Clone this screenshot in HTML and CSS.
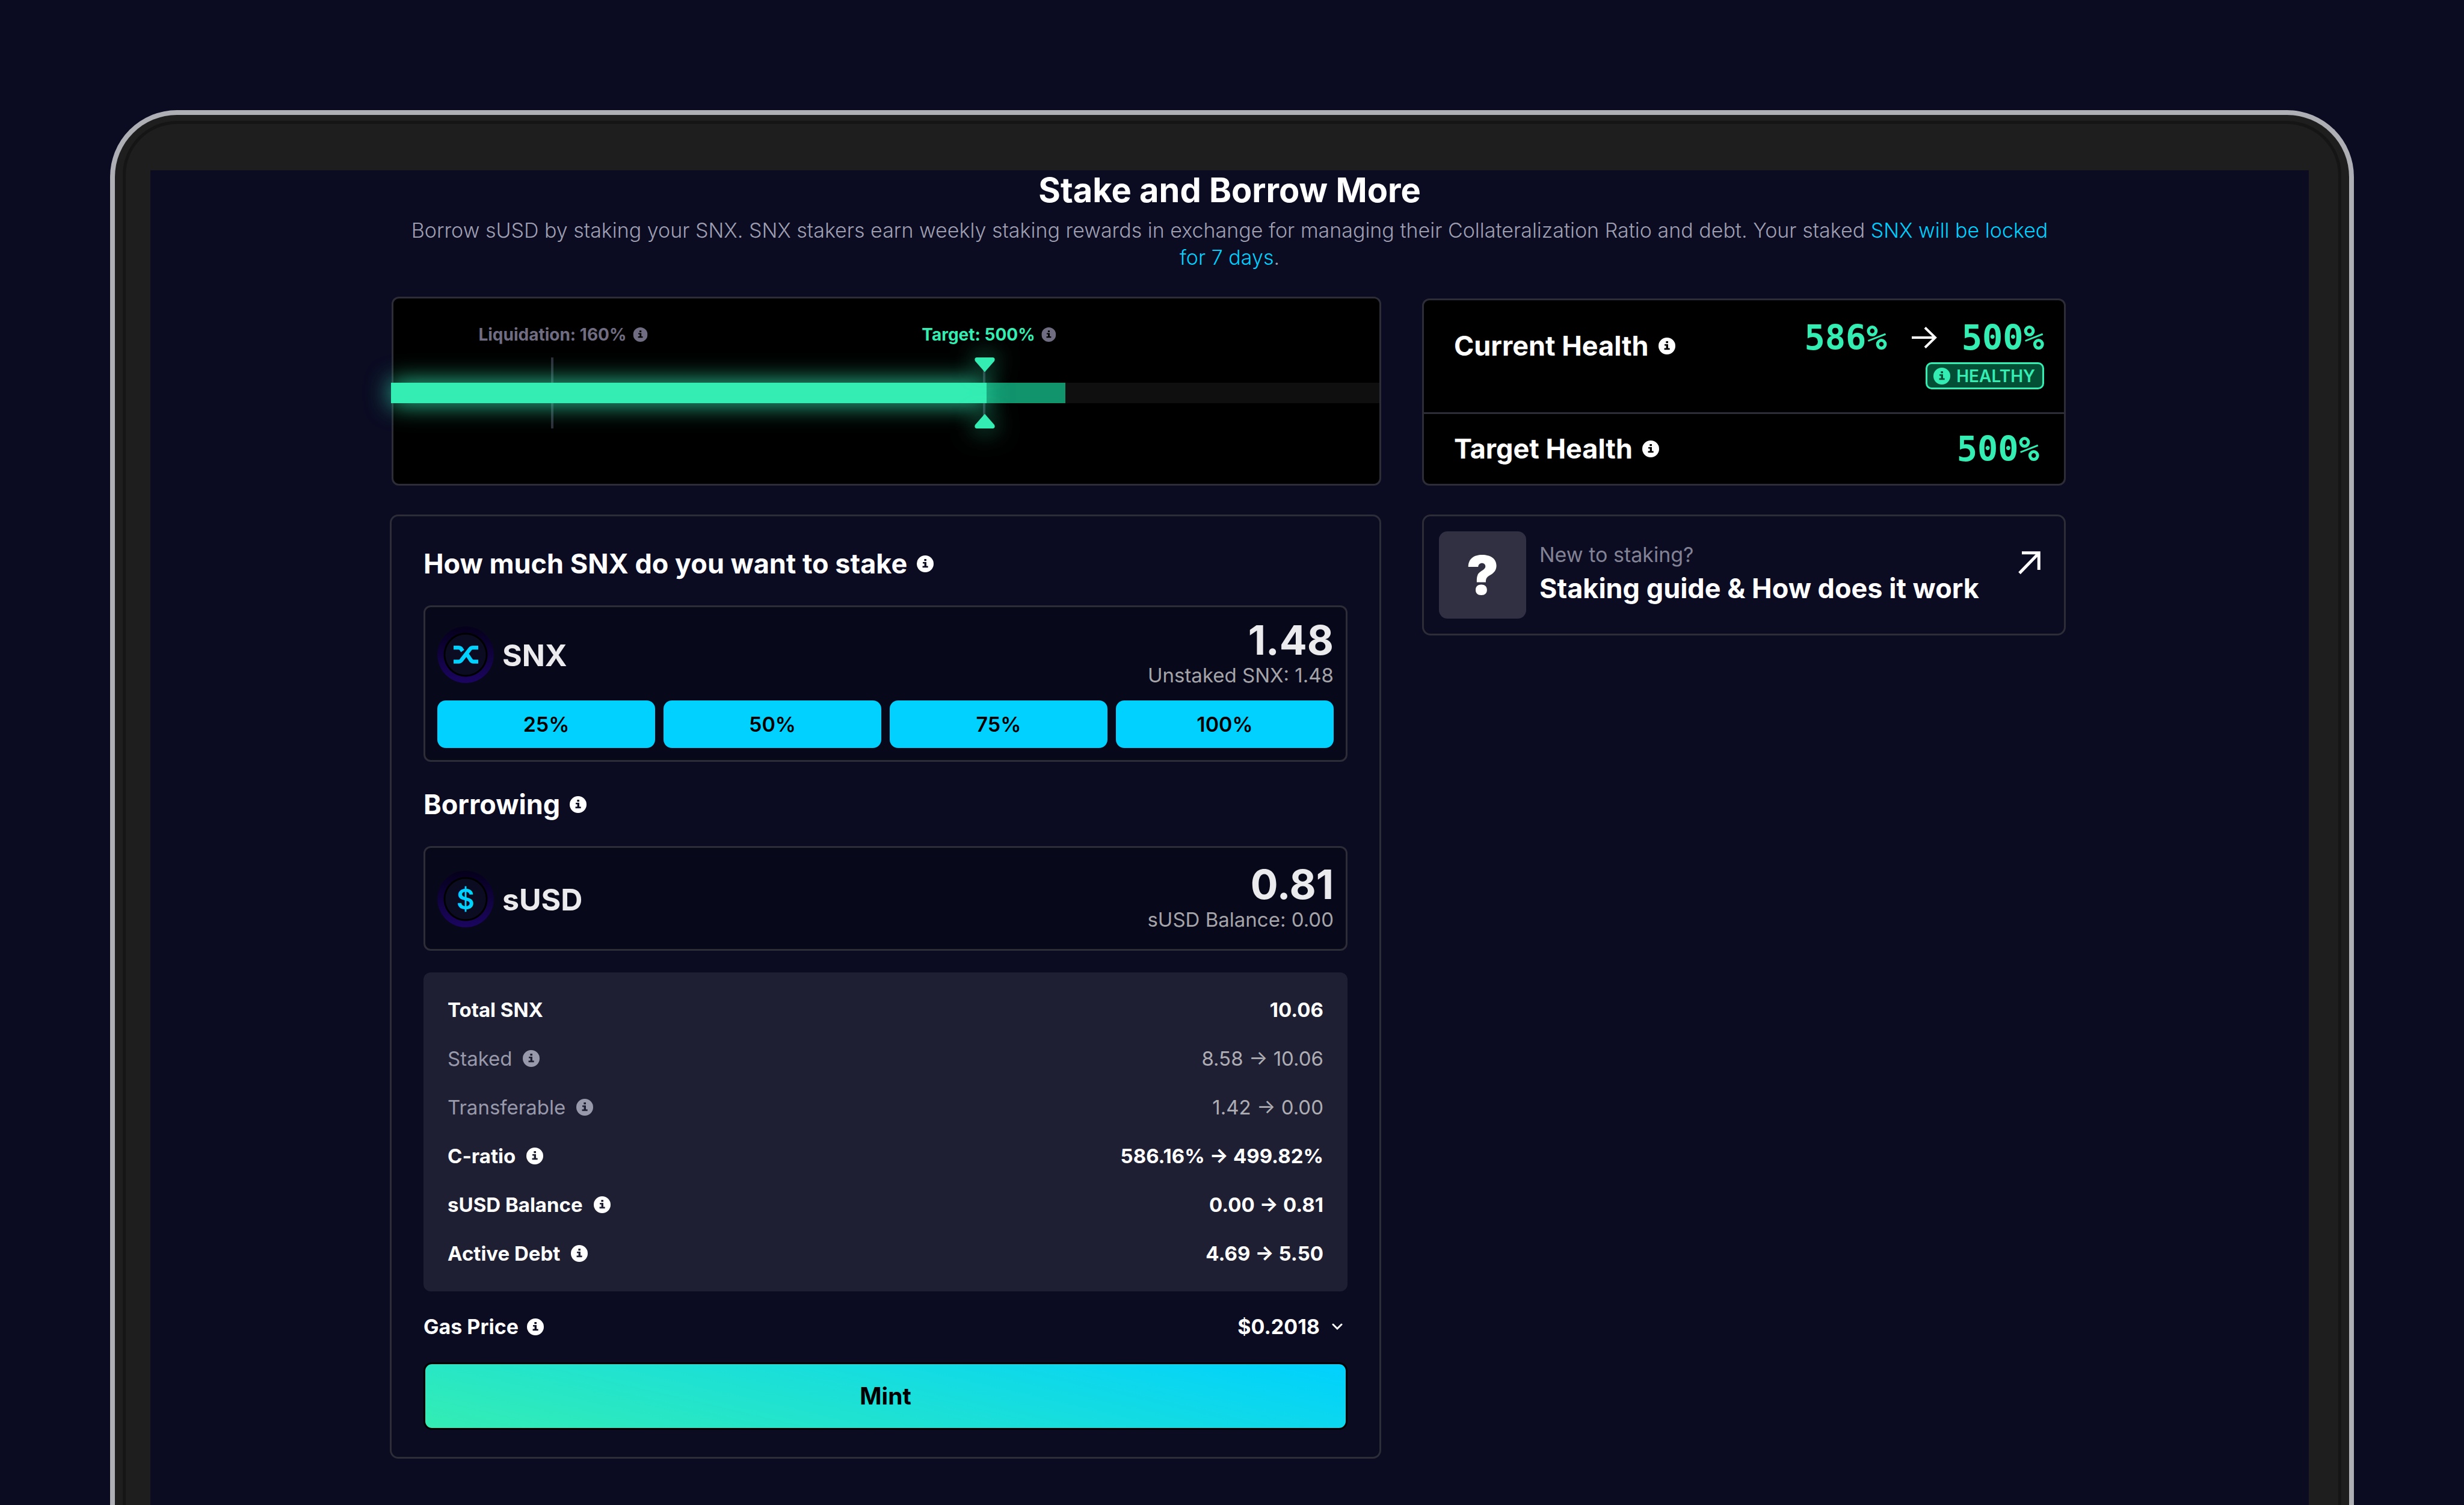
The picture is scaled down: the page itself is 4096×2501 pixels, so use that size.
FILE: index.html
```html
<!DOCTYPE html>
<html lang="en">
<head>
<meta charset="utf-8">
<meta name="viewport" content="width=device-width, initial-scale=1">
<title>Stake and Borrow More</title>
<link rel="stylesheet" href="styles.css">
</head>
<body>
<svg class="sprite" aria-hidden="true">
  <symbol id="info" viewBox="0 0 24 24">
    <path fill="currentColor" fill-rule="evenodd" d="M12 0a12 12 0 1 1 0 24a12 12 0 0 1 0-24zM10.6 5.2v2.7h3.1V5.2zM8.6 9.4v2.1h2.2v3.6H8.2v2.2h7.8v-2.2h-2.3V9.4z"/>
  </symbol>
</svg>
<div class="device">
  <div class="bezel">
    <main class="screen">
      <h1 class="title">Stake and Borrow More</h1>
      <p class="intro">Borrow sUSD by staking your SNX. SNX stakers earn weekly staking rewards in exchange for managing their Collateralization Ratio and debt. Your staked <a class="intro-link" href="#lock">SNX will be locked for 7 days</a>.</p>

      <div class="layout">
        <section class="gauge" aria-label="Collateralization ratio">
          <div class="track">
            <div class="tick" style="left: 16%"></div>
            <div class="tick" style="left: 59.8%"></div>
            <div class="bar bar-current" style="width: 68.4%"></div>
            <div class="bar bar-new" style="width: 60.4%"></div>
            <svg class="arrowhead arrowhead-top" style="left: 60%" viewBox="0 0 34 24"><path d="M3 0h28q4 1 2 6L18.500 22.500q-1.500 3-3 0L1 6Q-1 1 3 0z"/></svg>
            <svg class="arrowhead arrowhead-bottom" style="left: 60%" viewBox="0 0 34 24"><path d="M3 0h28q4 1 2 6L18.500 22.500q-1.500 3-3 0L1 6Q-1 1 3 0z"/></svg>
            <div class="mark" style="left: 17.2%">Liquidation: 160% <svg class="info-small"><use href="#info"/></svg></div>
            <div class="mark mark-target" style="left: 60.4%">Target: 500% <svg class="info-small"><use href="#info"/></svg></div>
          </div>
        </section>

        <section class="health">
          <div class="health-row health-current">
            <h2 class="heading">Current Health <svg class="info"><use href="#info"/></svg></h2>
            <div class="health-value">
              <div class="ratios">
                <span class="ratio">586%</span>
                <svg class="arrow-right" viewBox="0 0 42 36" fill="none" stroke="#fff" stroke-width="4"><path d="M0 18h39M22 1.500L39 18L22 34.500"/></svg>
                <span class="ratio">500%</span>
              </div>
              <span class="badge"><svg class="info"><use href="#info"/></svg>HEALTHY</span>
            </div>
          </div>
          <div class="health-row health-target">
            <h2 class="heading">Target Health <svg class="info"><use href="#info"/></svg></h2>
            <span class="ratio">500%</span>
          </div>
        </section>

        <section class="card">
          <h2 class="heading heading-form">How much SNX do you want to stake <svg class="info"><use href="#info"/></svg></h2>
          <div class="box">
            <div class="asset">
              <span class="coin"><svg class="coin-logo" viewBox="0 0 41 30" fill="none" stroke="#00d1ff" stroke-width="6.600"><path d="M0 3.300h8q3.500 0 5 2.500l2 3"/><path d="M0 26.500h8.500q3 0 5-3L27 6q2-2.700 5-2.700h9"/><path d="M22 14l6 9q2 3.500 5 3.500h8"/></svg></span>
              <label class="asset-name" for="stake">SNX</label>
              <div class="amount">
                <input class="amount-input" id="stake" type="text" value="1.48">
                <span class="amount-note">Unstaked SNX: 1.48</span>
              </div>
            </div>
            <div class="percents">
              <button class="percent" type="button">25%</button>
              <button class="percent" type="button">50%</button>
              <button class="percent" type="button">75%</button>
              <button class="percent" type="button">100%</button>
            </div>
          </div>

          <h2 class="heading heading-form heading-next">Borrowing <svg class="info"><use href="#info"/></svg></h2>
          <div class="box box-single">
            <div class="asset">
              <span class="coin"><span class="coin-sign">$</span></span>
              <label class="asset-name" for="borrow">sUSD</label>
              <div class="amount">
                <input class="amount-input" id="borrow" type="text" value="0.81">
                <span class="amount-note">sUSD Balance: 0.00</span>
              </div>
            </div>
          </div>

          <dl class="details">
            <div class="detail"><dt>Total SNX</dt><dd>10.06</dd></div>
            <div class="detail detail-muted"><dt>Staked <svg class="info"><use href="#info"/></svg></dt><dd>8.58 → 10.06</dd></div>
            <div class="detail detail-muted"><dt>Transferable <svg class="info"><use href="#info"/></svg></dt><dd>1.42 → 0.00</dd></div>
            <div class="detail"><dt>C-ratio <svg class="info"><use href="#info"/></svg></dt><dd>586.16% → 499.82%</dd></div>
            <div class="detail"><dt>sUSD Balance <svg class="info"><use href="#info"/></svg></dt><dd>0.00 → 0.81</dd></div>
            <div class="detail"><dt>Active Debt <svg class="info"><use href="#info"/></svg></dt><dd>4.69 → 5.50</dd></div>
          </dl>

          <div class="gas">
            <label class="gas-label" for="gas">Gas Price <svg class="info"><use href="#info"/></svg></label>
            <span class="gas-picker">
              <select class="gas-select" id="gas"><option>$0.2018</option></select>
              <svg class="chevron" viewBox="0 0 18 12" fill="none" stroke="#fff" stroke-width="3" stroke-linecap="round"><path d="M2 2l7 7l7-7"/></svg>
            </span>
          </div>
          <button class="mint" type="button">Mint</button>
        </section>

        <a class="guide" href="#guide">
          <span class="guide-icon">?</span>
          <span class="guide-text">
            <span class="guide-lead">New to staking?</span>
            <span class="guide-title">Staking guide &amp; How does it work</span>
          </span>
          <svg class="guide-arrow" viewBox="0 0 37 39" fill="none" stroke="#fff" stroke-width="5"><path d="M2 36.500L33.500 4M6 2.700h28.300V31"/></svg>
        </a>
      </div>
    </main>
  </div>
</div>
</body>
</html>
```
FILE: styles.css
```css
* {
  box-sizing: border-box;
}

body {
  margin: 0;
  min-height: 100vh;
  display: flex;
  flex-direction: column;
  background: #0b0b22;
  color: #fff;
  font-family: Inter, "Liberation Sans", sans-serif;
  font-size: 34px;
  line-height: 50px;
}

h1, h2, p, dl, dt, dd {
  margin: 0;
}

button, input, select {
  font: inherit;
  color: inherit;
  border: 0;
  padding: 0;
  background: none;
}

svg {
  display: block;
  flex: none;
}

.sprite {
  position: absolute;
  width: 0;
  height: 0;
}

/* Laptop frame */
.device {
  flex: 1;
  display: flex;
  margin: 183px 183px 0;
  padding: 10px 13px 0;
  border: 8px solid #aeafb5;
  border-bottom: 0;
  border-radius: 111px 111px 0 0;
  background: #1e1e1e;
}

.bezel {
  flex: 1;
  display: flex;
  padding: 77px 49px 0 41px;
  border: 5px solid #151515;
  border-bottom: 0;
  border-radius: 90px 90px 0 0;
}

.screen {
  flex: 1;
  min-width: 0;
  padding: 0 401px 77px;
  background: #0b0b22;
}

.title {
  font-size: 56px;
  line-height: 66px;
  font-weight: 700;
  text-align: center;
}

.intro {
  margin-top: 11px;
  padding: 0 10px;
  line-height: 45px;
  font-weight: 300;
  text-align: center;
  color: #9f9fb2;
}

.intro-link {
  color: #00d1ff;
  text-decoration: none;
}

.layout {
  display: grid;
  grid-template-columns: 1648fr 1070fr;
  column-gap: 68px;
  row-gap: 48px;
  margin: 43px 3px 0 -3px;
}

.info {
  width: 28px;
  height: 28px;
}

.info-small {
  width: 24px;
  height: 24px;
  color: #706d82;
}

.heading {
  display: flex;
  align-items: center;
  gap: 16px;
  font-size: 45px;
  line-height: 56px;
  font-weight: 700;
}

/* Ratio gauge */
.gauge {
  min-height: 314px;
  margin-left: 3px;
  padding-top: 140px;
  border: 3px solid #2d2d38;
  border-radius: 12px;
  background: #000;
}

.track {
  position: relative;
  height: 34px;
  background: #0f0f0f;
}

.bar {
  position: absolute;
  top: 0;
  left: -4px;
  height: 34px;
}

.bar-current {
  background: #11936c;
}

.bar-new {
  background: #34edb3;
  box-shadow: 0 0 40px rgba(52, 237, 179, 0.95);
}

.tick {
  position: absolute;
  top: -42px;
  width: 4px;
  height: 118px;
  background: #2d2d38;
}

.arrowhead {
  position: absolute;
  width: 34px;
  height: 24px;
  margin-left: -17px;
  overflow: visible;
  fill: #34edb3;
  filter: drop-shadow(0 0 20px rgba(52, 237, 179, 0.8));
}

.arrowhead-top {
  top: -42px;
}

.arrowhead-bottom {
  bottom: -42px;
  transform: rotate(180deg);
}

.mark {
  position: absolute;
  bottom: 96px;
  display: flex;
  align-items: center;
  gap: 11px;
  transform: translateX(-50%);
  font-size: 28px;
  line-height: 36px;
  font-weight: 700;
  white-space: nowrap;
  color: #706d82;
}

.mark-target {
  color: #34edb3;
}

/* Health summary */
.health {
  margin-top: 3px;
  border: 3px solid #2d2d38;
  border-radius: 12px;
  background: #000;
}

.health-row {
  display: flex;
  justify-content: space-between;
  padding-left: 50px;
}

.health-current {
  padding-top: 32px;
  padding-right: 33px;
  padding-bottom: 38px;
  border-bottom: 3px solid #2d2d38;
}

.health-current .heading {
  height: 56px;
  margin-top: 16px;
}

.health-target {
  align-items: center;
  padding-top: 28px;
  padding-right: 41px;
  padding-bottom: 28px;
}

.health-value {
  display: flex;
  flex-direction: column;
  align-items: flex-end;
  gap: 11px;
}

.ratios {
  display: flex;
  align-items: center;
  gap: 41px;
}

.ratio {
  font-family: "DejaVu Sans Mono", "Liberation Mono", monospace;
  font-size: 57px;
  line-height: 60px;
  font-weight: 700;
  color: #34edb3;
}

.arrow-right {
  width: 42px;
  height: 36px;
}

.badge {
  display: flex;
  align-items: center;
  gap: 10px;
  height: 45px;
  padding: 0 12px 0 10px;
  border: 3px solid #34edb3;
  border-radius: 10px;
  background: #034f35;
  font-size: 28px;
  font-weight: 600;
  color: #34edb3;
}

/* Staking form */
.card {
  padding: 51px 53px 45px;
  border: 3px solid #2d2d38;
  border-radius: 14px;
}

.heading-form {
  margin-bottom: 41px;
}

.heading-next {
  margin-top: 43px;
}

.box {
  padding: 20px;
  border: 3px solid #2d2d38;
  border-radius: 12px;
  background: #08081b;
}

.box-single {
  padding-top: 26px;
  padding-bottom: 24px;
}

.asset {
  display: flex;
  align-items: center;
  color: #ebebed;
}

.coin {
  flex: none;
  display: grid;
  place-items: center;
  width: 94px;
  height: 94px;
  border-radius: 50%;
  background:
    radial-gradient(circle, #0b0b22 33px, #000 34px, #000 36px, transparent 37px),
    linear-gradient(#05001a, #1b0560);
}

.coin-logo {
  width: 41px;
  height: 30px;
}

.coin-sign {
  font-size: 46px;
  line-height: 46px;
  font-weight: 600;
  color: #00d1ff;
}

.asset-name {
  margin-left: 14px;
  padding-top: 2px;
  font-size: 50px;
  line-height: 60px;
  font-weight: 700;
}

.amount {
  flex: 1;
  display: flex;
  flex-direction: column;
}

.amount-input {
  width: 100%;
  height: 68px;
  font-size: 68px;
  line-height: 68px;
  font-weight: 700;
  text-align: right;
}

.amount-note {
  font-size: 33px;
  text-align: right;
  color: #a4a4a9;
}

.percents {
  display: grid;
  grid-template-columns: repeat(4, 1fr);
  gap: 14px;
  margin-top: 17px;
}

.percent {
  height: 79px;
  border-radius: 14px;
  background: #00d1ff;
  font-weight: 600;
  color: #000;
}

.details {
  margin-top: 36px;
  padding: 21px 40px 23px;
  border-radius: 12px;
  background: #1f1f33;
  font-size: 33px;
  font-weight: 700;
}

.detail {
  display: flex;
  align-items: center;
  justify-content: space-between;
  height: 81px;
}

.detail dt {
  display: flex;
  align-items: center;
  gap: 18px;
}

.detail-muted {
  font-weight: 400;
}

.detail-muted dt {
  color: #9999ac;
}

.detail-muted dd {
  color: #adadb3;
}

.gas {
  display: flex;
  align-items: center;
  justify-content: space-between;
  padding: 34px 0;
  font-weight: 700;
}

.gas-label {
  display: flex;
  align-items: center;
  gap: 14px;
}

.gas-picker {
  display: flex;
  align-items: center;
  gap: 20px;
  padding-right: 8px;
}

.gas-select {
  appearance: none;
  field-sizing: content;
}

.chevron {
  width: 18px;
  height: 12px;
}

.mint {
  display: block;
  width: 100%;
  height: 112px;
  border: 3px solid #000;
  border-radius: 14px;
  background: linear-gradient(13deg, #34edb3, #00d1ff);
  font-size: 39px;
  font-weight: 700;
  color: #000;
}

/* Guide link */
.guide {
  align-self: start;
  display: flex;
  align-items: center;
  padding: 25px 39px 25px 25px;
  border: 3px solid #2d2d38;
  border-radius: 14px;
  color: #fff;
  text-decoration: none;
}

.guide-icon {
  flex: none;
  width: 145px;
  height: 145px;
  border-radius: 14px;
  background: #303042;
  font-size: 90px;
  line-height: 145px;
  font-weight: 900;
  text-align: center;
}

.guide-text {
  flex: 1;
  display: flex;
  flex-direction: column;
  margin-left: 22px;
  padding-bottom: 5px;
}

.guide-lead {
  color: #828295;
}

.guide-title {
  font-size: 45px;
  line-height: 62px;
  font-weight: 700;
}

.guide-arrow {
  align-self: flex-start;
  width: 37px;
  height: 39px;
  margin-top: 33px;
}
```
